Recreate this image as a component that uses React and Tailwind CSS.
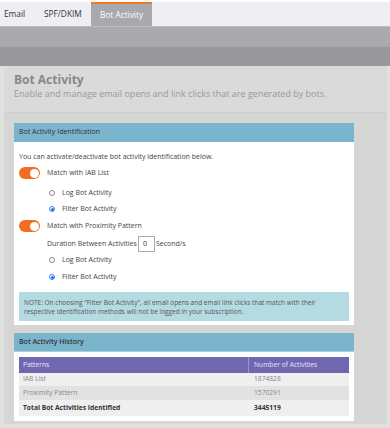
import React from 'react';

const Toggle = () => (
  <span className="relative inline-block w-[21px] h-[12px] rounded-full bg-[#f26d21] shrink-0">
    <span className="absolute right-[1.5px] top-[1.5px] w-[9px] h-[9px] rounded-full bg-white" />
  </span>
);

const Radio = ({ checked, label, className = '' }) => (
  <div className={`flex items-center h-[16px] pl-[30px] ${className}`}>
    <span className={`w-[6px] h-[6px] rounded-full border flex items-center justify-center ${checked ? 'border-[#3b82f6]' : 'border-[#888]'}`}>
      {checked && <span className="w-[3px] h-[3px] rounded-full bg-[#1f6fe0]" />}
    </span>
    <span className="ml-[7px]">{label}</span>
  </div>
);

export default function App() {
  return (
    <div className="w-[390px] h-[428px] overflow-hidden bg-white text-[#444]" style={{ fontFamily: '"Open Sans", "Liberation Sans", sans-serif' }}>
      {/* Tabs */}
      <div className="mt-[2px] h-[24px] bg-[#efeff3] flex text-[8.3px] text-[#333]">
        <div className="w-[34px] pl-[4px] flex items-center">Email</div>
        <div className="w-[57px] pl-[10px] flex items-center">SPF/DKIM</div>
        <div className="w-[61px] bg-[#a9a8ad] border-t-[2px] border-[#ef7a23] flex items-center justify-center text-white">Bot Activity</div>
      </div>
      <div className="h-[20px] bg-[#aaa9ae] border-t border-[#bdbcc0]" />
      <div className="h-[20px] bg-[#99989d] border-t border-[#a5a4a9]" />

      <div className="bg-[#e0e0e0] px-[4px] pr-[3px] h-[362px]">
        {/* Page header */}
        <div className="h-[47px] bg-[#dadada] border-b border-[#cfcfcf] px-[10px] pt-[6px]">
          <div className="text-[12px] font-bold text-[#888] leading-[15px]">Bot Activity</div>
          <div className="text-[9px] text-[#999] leading-[14px]">Enable and manage email opens and link clicks that are generated by bots.</div>
        </div>

        <div className="bg-[#d6d6d6] h-[311px] pt-[10px] pl-[10px]">
          {/* Identification card */}
          <div className="w-[340px] bg-white text-[7px] text-[#444]">
            <div className="h-[19px] bg-[#7ab5cd] text-[#333] text-[7px] flex items-center px-[5px]">Bot Activity Identification</div>
            <div className="px-[5px] pt-[7px] pb-[4px]">
              <div className="h-[16px] flex items-center">You can activate/deactivate bot activity identification below.</div>
              <div className="h-[16px] flex items-center">
                <Toggle />
                <span className="ml-[7px]">Match with IAB List</span>
              </div>
              <Radio className="mt-[4px]" label="Log Bot Activity" />
              <Radio checked label="Filter Bot Activity" />
              <div className="mt-[1px] h-[16px] flex items-center">
                <Toggle />
                <span className="ml-[7px]">Match with Proximity Pattern</span>
              </div>
              <div className="mt-[2px] h-[16px] flex items-center pl-[28px]">
                <span>Duration Between Activities</span>
                <span className="ml-[1px] w-[17px] h-[16px] border border-[#aaa] flex items-center pl-[4px] text-[#333]">0</span>
                <span className="ml-[1px]">Second/s</span>
              </div>
              <Radio label="Log Bot Activity" />
              <Radio className="mt-[1px]" checked label="Filter Bot Activity" />
              <div className="mt-[7px] h-[29px] bg-[#b5dbe2] px-[5px] flex flex-col justify-center text-[6.5px] leading-[9px] text-[#555]">
                <div>NOTE: On choosing "Filter Bot Activity", all email opens and email link clicks that match with their</div>
                <div>respective identification methods will not be logged in your subscription.</div>
              </div>
            </div>
          </div>

          {/* History card */}
          <div className="mt-[8px] w-[340px] bg-white text-[6.7px]">
            <div className="h-[19px] bg-[#7ab5cd] text-[#333] text-[7px] font-semibold flex items-center px-[5px] border-b border-[#a8d0de]">Bot Activity History</div>
            <div className="px-[5px] pt-[5px] pb-[5px]">
              <div className="flex h-[16px] bg-[#7067b1] text-[#e8e6f5] items-center">
                <div className="w-[230px] pl-[4px] border-r border-[#9c95cb] h-full flex items-center">Patterns</div>
                <div className="pl-[5px]">Number of Activities</div>
              </div>
              <div className="flex h-[13px] bg-[#efefef] text-[#888] items-center">
                <div className="w-[230px] pl-[4px]">IAB List</div>
                <div className="pl-[5px]">1874828</div>
              </div>
              <div className="flex h-[14px] bg-[#e2e2e2] text-[#888] items-center">
                <div className="w-[230px] pl-[4px]">Proximity Pattern</div>
                <div className="pl-[5px]">1570291</div>
              </div>
              <div className="flex h-[16px] bg-[#efefef] text-[#333] font-bold items-center">
                <div className="w-[230px] pl-[4px]">Total Bot Activities Identified</div>
                <div className="pl-[5px]">3445119</div>
              </div>
            </div>
          </div>
        </div>
      </div>
    </div>
  );
}
